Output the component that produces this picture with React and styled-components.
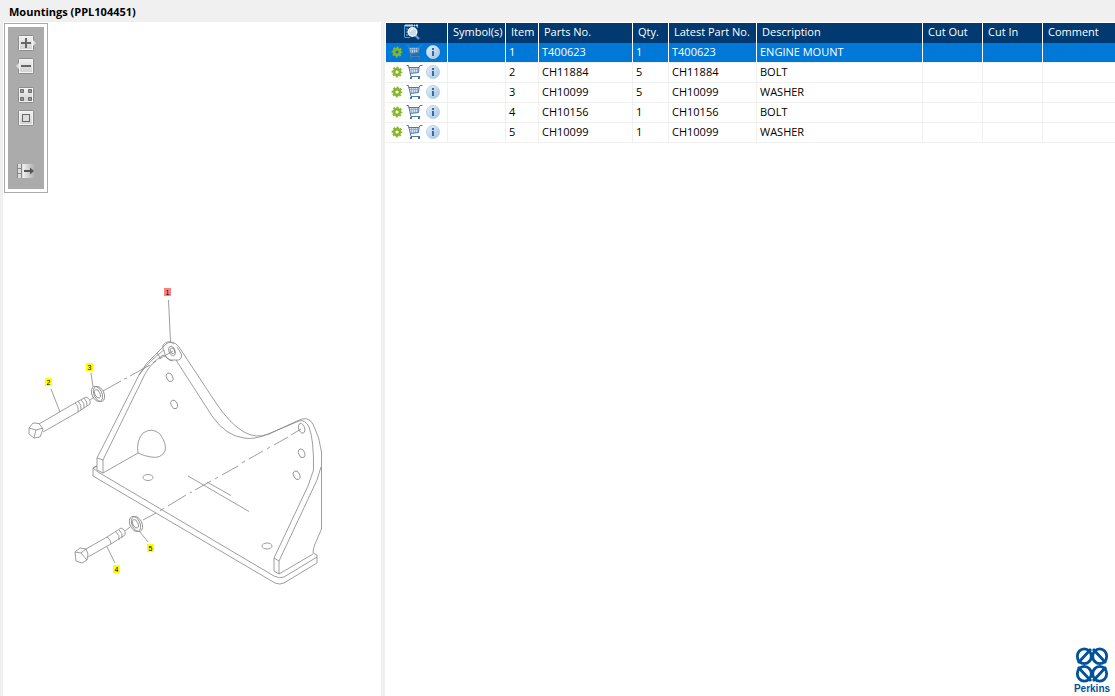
import React from 'react';
import styled, { createGlobalStyle } from 'styled-components';

const GlobalStyle = createGlobalStyle`
  * {
    box-sizing: border-box;
  }
  body {
    margin: 0;
    background: #f0f0f0;
    color: #000;
    font-family: 'Open Sans', 'Noto Sans', sans-serif;
    font-size: 11px;
  }
`

const Page = styled.div`
  display: flex;
  flex-direction: column;
  min-height: 100vh;
`

const Title = styled.h1`
  margin: 0;
  padding: 2px 9px 0;
  height: 22px;
  font-size: 11px;
  line-height: 20px;
  font-weight: bold;
`

const Panes = styled.main`
  flex: 1;
  display: grid;
  grid-template-columns: 378px minmax(0, 1fr);
  gap: 4px;
  padding-left: 3px;
`

const DrawingPane = styled.section`
  background: #fff;
  padding: 1px 0 0 1px;
`

const ListPane = styled.section`
  display: flex;
  flex-direction: column;
  justify-content: space-between;
  align-items: flex-end;
  background: #fff;
  padding: 1px 0 0 1px;
`

const Toolbar = styled.div`
  width: 44px;
  height: 170px;
  padding: 7px 0 0;
  display: flex;
  flex-direction: column;
  align-items: center;
  background: #ababab;
  border: 1px solid #ababab;
  box-shadow: inset 0 0 0 3px #fff;
`

const ToolButton = styled.button`
  display: block;
  width: 20px;
  height: 18px;
  margin: ${(props) => props.$gap || 5}px 0 0;
  padding: 0;
  border: 0;
  background: none;
  svg {
    display: block;
  }
`

const Drawing = styled.svg`
  display: block;
  width: 100%;
  font-family: 'Liberation Sans', sans-serif;
  font-size: 7px;
`

const Parts = styled.table`
  width: 100%;
  table-layout: fixed;
  border-collapse: separate;
  border-spacing: 0;
`

const Col = styled.col`
  width: ${(props) => (props.$width ? props.$width + 'px' : 'auto')};
`

const Head = styled.th`
  height: 20px;
  padding: 0 0 2px 5px;
  background: #003a70;
  color: #fff;
  border-right: 1px solid #fff;
  font-weight: normal;
  line-height: 18px;
  text-align: left;
  white-space: nowrap;
  &:last-child {
    border-right: 0;
  }
  svg {
    display: block;
    margin-left: 13px;
  }
`

const Row = styled.tr`
  background: ${(props) => (props.$selected ? '#0078d7' : '#fff')};
  color: ${(props) => (props.$selected ? '#fff' : '#000')};
  td {
    border-right-color: ${(props) => (props.$selected ? '#fff' : '#f0f0f0')};
  }
`

const Cell = styled.td`
  height: 20px;
  padding: 0 0 2px 3px;
  border-right: 1px solid #f0f0f0;
  border-bottom: 1px solid #f0f0f0;
  line-height: 17px;
  white-space: nowrap;
  &:last-child {
    border-right: 0;
  }
`

const Actions = styled.div`
  display: flex;
  align-items: center;
  gap: 3px;
  padding-left: 2px;
`

const IconButton = styled.button`
  padding: 0;
  border: 0;
  background: none;
  svg {
    display: block;
  }
`

const Brand = styled.footer`
  width: 46px;
  padding-bottom: 1px;
  color: #00529b;
  font-family: 'Liberation Sans', sans-serif;
  font-size: 10px;
  line-height: 12px;
  font-weight: bold;
  text-align: center;
  svg {
    display: block;
    margin: 0 auto;
  }
`

const columns = [
  { label: 'Symbol(s)', width: 58 },
  { label: 'Item', width: 33 },
  { label: 'Parts No.', width: 94 },
  { label: 'Qty.', width: 36 },
  { label: 'Latest Part No.', width: 88 },
  { label: 'Description', width: 166 },
  { label: 'Cut Out', width: 60 },
  { label: 'Cut In', width: 60 },
  { label: 'Comment' }
];

const parts = [
  { item: 1, no: 'T400623', qty: 1, description: 'ENGINE MOUNT' },
  { item: 2, no: 'CH11884', qty: 5, description: 'BOLT' },
  { item: 3, no: 'CH10099', qty: 5, description: 'WASHER' },
  { item: 4, no: 'CH10156', qty: 1, description: 'BOLT' },
  { item: 5, no: 'CH10099', qty: 1, description: 'WASHER' }
];

const callouts = [
  { item: 1, x: 164, y: 288 },
  { item: 2, x: 45, y: 378 },
  { item: 3, x: 86, y: 363 },
  { item: 4, x: 113, y: 565 },
  { item: 5, x: 147, y: 544 }
];

const ToolPlate = ({ children }) => (
  <svg width="20" height="18" viewBox="0 0 20 18">
    <defs>
      <linearGradient id="plate" x1="0" y1="0" x2="0" y2="1">
        <stop offset="0" stopColor="#f2f2f2" />
        <stop offset="1" stopColor="#cfcfcf" />
      </linearGradient>
    </defs>
    <rect x="2.5" y="1.5" width="15" height="15" rx="1" fill="url(#plate)" stroke="#8c8c8c" />
    <rect x="3.5" y="2.5" width="13" height="13" fill="none" stroke="#f4f4f4" />
    {children}
  </svg>
);

const GearIcon = () => (
  <svg width="12" height="12" viewBox="0 0 12 12">
    <circle cx="6" cy="6" r="4.7" fill="none" stroke="#86b72b" strokeWidth="1.4" strokeDasharray="2.1 1.59" strokeDashoffset="1.05" />
    <circle cx="6" cy="6" r="2.9" fill="none" stroke="#86b72b" strokeWidth="2.6" />
  </svg>
);

const CartIcon = ({ selected }) => (
  <svg width="17" height="16" viewBox="0 0 17 16">
    <path d="M2.5 3.5H13.5L12.5 8.5L4.5 9.5Z" fill={selected ? '#a9cbea' : '#d5e3f1'} />
    <path
      d="M5.5 3.5V9M7.5 3.5V9M9.5 3.5V9M11.5 3.5V8.5M3.500 5.500H12.500"
      fill="none"
      stroke={selected ? '#5d8fc4' : '#7fa3cb'}
      strokeWidth="0.7"
    />
    <path
      d="M0.5 1.5H2.5L5 12.5H14M2.500 3.500H13L12.500 8.500L4.500 9.500M13 3.500L14 1.500H16.500"
      fill="none"
      stroke={selected ? '#66768f' : '#4d77a9'}
    />
    <rect x="4" y="13" width="2" height="2" fill="#4d6f9d" />
    <rect x="12" y="13" width="2" height="2" fill="#4d6f9d" />
  </svg>
);

const InfoIcon = () => (
  <svg width="14" height="14" viewBox="0 0 14 14">
    <defs>
      <linearGradient id="info" x1="0" y1="0" x2="1" y2="1">
        <stop offset="0" stopColor="#e8f1f9" />
        <stop offset="1" stopColor="#9fc3e2" />
      </linearGradient>
    </defs>
    <circle cx="7" cy="7" r="6.6" fill="url(#info)" stroke="#b5cfe6" strokeWidth="0.8" />
    <rect x="6" y="3" width="2" height="2" fill="#3869a5" />
    <rect x="6" y="6" width="2" height="5" fill="#3869a5" />
  </svg>
);

const FindIcon = () => (
  <svg width="17" height="16" viewBox="0 0 17 16">
    <path d="M0.5 1V13.5M1 1.5H13.5V4M1 13.5H6" fill="none" stroke="#5b9bd0" />
    <path d="M1 1.5H14" stroke="#b9d8ee" strokeWidth="2" strokeDasharray="8 1 1 1" />
    <path d="M3 4V12" stroke="#86b9df" strokeDasharray="2 1" />
    <path d="M11.5 11.5L15 15" stroke="#6f9cc6" strokeWidth="2.4" />
    <circle cx="8.5" cy="8" r="4.3" fill="#c9d9e8" stroke="#f2f5f8" strokeWidth="1.4" />
    <path d="M6 8A2.6 2.6 0 0 1 9 5.5" fill="none" stroke="#fff" />
  </svg>
);

const BrandIcon = () => (
  <svg width="34" height="36" viewBox="0 0 34 36">
    <g fill="none" stroke="#00529b" strokeWidth="2.8">
      <ellipse cx="9.3" cy="9.3" rx="7" ry="7.4" />
      <ellipse cx="24.700" cy="9.3" rx="7" ry="7.4" />
      <ellipse cx="9.3" cy="26.700" rx="7" ry="7.4" />
      <ellipse cx="24.700" cy="26.700" rx="7" ry="7.4" />
      <path d="M3 16L16 2M31 16L18 2M3 20L16 34M31 20L18 34" />
      <path d="M13.500 14.500L17 11.500L20.500 14.500M13.500 21.500L17 24.500L20.500 21.500" strokeWidth="2" />
    </g>
  </svg>
);

const PartDrawing = () => (
  <Drawing viewBox="4 193 377 410" role="img" aria-label="Engine mounting drawing">
    <g fill="none" stroke="#858585" strokeWidth="0.8">
      {/* bracket plate */}
      <path d="M97 458L139 375Q145 363 157 353L166 344Q173 339 179 347L216 403Q230 424 244 432Q256 439 269 434L297 421Q308 415 313 424Q320 438 321.5 452V529L315 544Q313 549 313 553L317 555V563L284 583Q280 585 275 583L93 476V468L97 466" />
      <path d="M103 460L145 374Q151 363 163 355L170 360L176 360L212 416Q226 436 244 438Q254 440 268 434L299 421Q305 419 309 427Q314 440 313.500 470L308 486L274 558V571L279 574L313 554" />
      <path d="M321 467L317 480L279 561V574M274 558L279 561M93 468L98 472L274 576Q280 579 284 577L317 557M93 468L97 466M97 458V470L103 473V460L97 458M103 473L138 453M139 375Q149 361 164 350M157 353L161 359" />
      <path d="M176 360Q182 361 181.500 354L177 347M163 350V345Q168 339 174 344M164 350Q165 360 173 361" />
      <ellipse cx="172" cy="351" rx="3" ry="5" transform="rotate(-22 172 351)" />
      <ellipse cx="172.500" cy="351" rx="2" ry="3" transform="rotate(-22 172 351)" />
      {/* holes */}
      <ellipse cx="169.500" cy="377.500" rx="3" ry="4.500" transform="rotate(-22 169 377)" />
      <ellipse cx="174" cy="404.500" rx="3" ry="4.500" transform="rotate(-25 174 404)" />
      <ellipse cx="301.500" cy="428.500" rx="3" ry="5" transform="rotate(-18 301 428)" />
      <ellipse cx="301.500" cy="453.500" rx="3" ry="4.500" transform="rotate(-20 301 453)" />
      <ellipse cx="296.500" cy="475.500" rx="3" ry="4.500" transform="rotate(-25 296 475)" />
      <ellipse cx="148" cy="477.500" rx="5" ry="3" />
      <ellipse cx="267" cy="546" rx="5" ry="3" />
      <path d="M138 453Q136 441 143 433Q152 427 160 434Q167 444 165 451Q161 459 151 457Q144 456 138 453Z" />
      <path d="M188 476L249 511.500M207 482L231 495.500" />
      {/* centre lines */}
      <path d="M103 391L121 381M124 379L127 378M130 376L150 365M153 363L156 361M159 359L173 351" />
      <path d="M143 520L156 513M160 511L164 508M168 506L186 495M190 493L192 492M195 490L211 481M215 479L218 477M222 475L238 466M242 463L245 461M249 459L263 451M267 449L270 447M274 445L288 437M291 435L301 429" />
      {/* long bolt */}
      <path d="M29 428L33 423L39 423.500L43 429L40 437L34 438L29 434ZM29 428L36 430L43 428M36 430L34 438M39 424L75 403L86 397Q91 399 90 404L78 412L43 432M75 403Q79 406 78 412M78 401Q82 405 81 410M81 400Q85 403 84 408M84 398Q88 402 87 406" />
      {/* short bolt */}
      <path d="M75 552L80 548L86 549L88 554L87 560L82 563L76 561ZM75 552L81 553L86 549M81 553L87 560M86 549L107 537L121 528Q126 530 125 535L111 544L88 557M107 537Q111 539 111 544M116 532Q120 535 119 540M119 530Q123 533 122 538M125 531L130 527M90 400L94 397" />
      {/* washers */}
      <ellipse cx="97" cy="394" rx="5" ry="8" transform="rotate(-25 97 394)" />
      <ellipse cx="99" cy="394" rx="5" ry="8" transform="rotate(-25 99 394)" />
      <ellipse cx="97.500" cy="394" rx="2.500" ry="4.500" transform="rotate(-25 97 394)" />
      <ellipse cx="135" cy="524" rx="5" ry="8" transform="rotate(-25 135 524)" />
      <ellipse cx="137" cy="524" rx="5" ry="8" transform="rotate(-25 137 524)" />
      <ellipse cx="135.500" cy="524" rx="2.500" ry="4.500" transform="rotate(-25 135 524)" />
      {/* leaders */}
      <path d="M168.500 300L170.500 342M51 389L60 412M91 373L93 387M107 547L115 563M140 532L148 542" />
    </g>
    {callouts.map((c) => (
      <g key={c.item}>
        <rect x={c.x} y={c.y} width="7" height="8" fill={c.item === 1 ? '#ff8080' : '#ffff00'} />
        <text x={c.x + 3.5} y={c.y + 6.5} textAnchor="middle">{c.item}</text>
      </g>
    ))}
  </Drawing>
);

export default function App() {
  return (
    <Page>
      <GlobalStyle />
      <Title>Mountings (PPL104451)</Title>
      <Panes>
        <DrawingPane>
          <Toolbar role="toolbar" aria-label="Drawing tools">
            <ToolButton aria-label="Zoom in" $gap={3}>
              <ToolPlate>
                <path d="M17 6L20 9L17 12Z" fill="#ddd" />
                <path d="M10 4V14M5 9H15" stroke="#666" strokeWidth="2" />
              </ToolPlate>
            </ToolButton>
            <ToolButton aria-label="Zoom out">
              <ToolPlate>
                <path d="M3 6L0 9L3 12Z" fill="#ddd" />
                <path d="M5 9H15" stroke="#666" strokeWidth="2" />
              </ToolPlate>
            </ToolButton>
            <ToolButton aria-label="Fit to window" $gap={11}>
              <ToolPlate>
                <path d="M4.500 3.500H7.500V6.500H4.500ZM12.500 3.500H15.500V6.500H12.500ZM4.500 11.500H7.500V14.500H4.500ZM12.500 11.500H15.500V14.500H12.500Z" fill="#999" stroke="#6b6b6b" />
              </ToolPlate>
            </ToolButton>
            <ToolButton aria-label="Actual size">
              <ToolPlate>
                <rect x="6.500" y="5.500" width="7" height="7" fill="#ddd" stroke="#666" />
              </ToolPlate>
            </ToolButton>
            <ToolButton aria-label="Hide drawing" $gap={35}>
              <svg width="20" height="18" viewBox="0 0 20 18">
                <defs>
                  <linearGradient id="fade">
                    <stop offset="0" stopColor="#f0f0f0" />
                    <stop offset="1" stopColor="#ababab" />
                  </linearGradient>
                </defs>
                <rect x="1" y="2" width="6" height="14" fill="#ddd" />
                <rect x="7" y="2" width="12" height="14" fill="url(#fade)" />
                <path d="M1.500 2V16M5.500 2V16M1 6.500H6M1 11.500H6" stroke="#888" />
                <path d="M8 9H15" stroke="#555" strokeWidth="2" />
                <path d="M14 5.500L18 9L14 12.500Z" fill="#555" />
              </svg>
            </ToolButton>
          </Toolbar>
          <PartDrawing />
        </DrawingPane>
        <ListPane>
          <Parts>
            <colgroup>
              <Col $width={62} />
              {columns.map((col) => <Col key={col.label} $width={col.width} />)}
            </colgroup>
            <thead>
              <tr>
                <Head aria-label="Actions"><FindIcon /></Head>
                {columns.map((col) => <Head key={col.label}>{col.label}</Head>)}
              </tr>
            </thead>
            <tbody>
              {parts.map((part) => {
                const selected = part.item === 1;
                return (
                  <Row key={part.item} $selected={selected}>
                    <Cell>
                      <Actions>
                        <IconButton aria-label="Options"><GearIcon /></IconButton>
                        <IconButton aria-label="Add to cart"><CartIcon selected={selected} /></IconButton>
                        <IconButton aria-label="Information"><InfoIcon /></IconButton>
                      </Actions>
                    </Cell>
                    <Cell />
                    <Cell>{part.item}</Cell>
                    <Cell>{part.no}</Cell>
                    <Cell>{part.qty}</Cell>
                    <Cell>{part.no}</Cell>
                    <Cell>{part.description}</Cell>
                    <Cell />
                    <Cell />
                    <Cell />
                  </Row>
                );
              })}
            </tbody>
          </Parts>
          <Brand>
            <BrandIcon />
            Perkins
          </Brand>
        </ListPane>
      </Panes>
    </Page>
  );
}
